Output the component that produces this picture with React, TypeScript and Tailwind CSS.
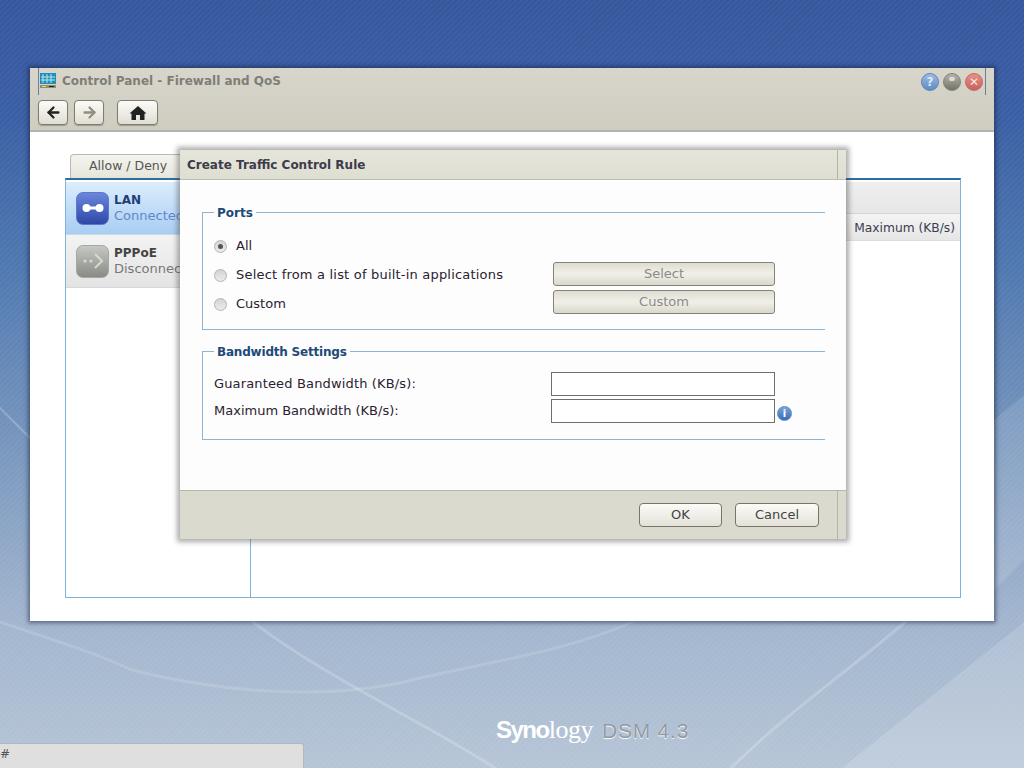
import React from 'react';
import { ArrowLeft, ArrowRight } from 'lucide-react';

const Wallpaper = () => (
  <svg className="absolute inset-0 w-full h-full" viewBox="0 0 1024 768" preserveAspectRatio="none">
    <defs>
      <linearGradient id="sky" x1="0" y1="0" x2="0" y2="1">
        <stop offset="0" stopColor="#34569c" />
        <stop offset="0.15" stopColor="#3a5ea4" />
        <stop offset="0.35" stopColor="#4f78b0" />
        <stop offset="0.55" stopColor="#7292bb" />
        <stop offset="0.8" stopColor="#a0b4cd" />
        <stop offset="1" stopColor="#b6c5d6" />
      </linearGradient>
      <pattern id="hatch" width="4" height="4" patternUnits="userSpaceOnUse" patternTransform="rotate(45)">
        <rect width="2" height="4" fill="#ffffff" opacity="0.04" />
      </pattern>
    </defs>
    <rect width="1024" height="768" fill="url(#sky)" />
    <path d="M842 768 L1024 622 L1024 768 Z" fill="#ffffff" opacity="0.15" />
    <path d="M994 420 L1024 395 L1024 560 L994 590 Z" fill="#ffffff" opacity="0.12" />
    <g fill="none" stroke="#ffffff" strokeLinecap="round">
      <path d="M0 408 L30 438" strokeWidth="2" opacity="0.22" />
      <path d="M0 622 C60 642 100 655 132 670 C230 695 340 700 420 678 C500 660 570 650 632 622" strokeWidth="3" opacity="0.14" />
      <path d="M253 622 C330 680 420 720 495 768" strokeWidth="3" opacity="0.2" />
      <path d="M905 622 C850 670 790 710 731 768" strokeWidth="3" opacity="0.2" />
    </g>
    <rect width="1024" height="768" fill="url(#hatch)" />
  </svg>
);

const ToolButton = ({ children, className }: { children: React.ReactNode; className: string }) => (
  <div className={`h-[25px] flex items-center justify-center rounded-[4px] border border-[#7f7d70] bg-gradient-to-b from-[#fbfbf8] to-[#e0ded3] shadow-[0_1px_1px_rgba(0,0,0,0.25)] ${className}`}>
    {children}
  </div>
);

const Ball = ({ className, children }: { className: string; children?: React.ReactNode }) => (
  <div className={`w-[18px] h-[18px] rounded-full flex items-center justify-center text-[12px] font-bold border leading-none ${className}`}>
    {children}
  </div>
);

const Radio = ({ checked }: { checked?: boolean }) => (
  <div className="w-[13px] h-[13px] rounded-full border border-[#b4b4b4] bg-gradient-to-b from-[#d4d4d4] to-[#ececec] flex items-center justify-center shrink-0">
    {checked && <div className="w-[5px] h-[5px] rounded-full bg-[#555]" />}
  </div>
);

const NetItem = ({ name, status, active }: { name: string; status: string; active?: boolean }) => (
  <div className={`h-[53px] flex items-center pl-[10px] gap-[5px] border-b overflow-hidden ${active ? 'bg-gradient-to-b from-[#dcedfd] to-[#a9cdf2] border-[#c5d8ec]' : 'bg-gradient-to-b from-[#f3f3f3] to-[#e4e4e4] border-[#d8d8d8]'}`}>
    <div className={`w-[33px] h-[33px] rounded-[7px] border flex items-center justify-center shrink-0 ${active ? 'bg-gradient-to-b from-[#6a86dc] to-[#2f48a8] border-[#5c78c8]' : 'bg-gradient-to-b from-[#c6c8c4] to-[#888b86] border-[#a5a7a3]'}`}>
      {active ? (
        <svg width="24" height="12" viewBox="0 0 24 12">
          <rect x="5" y="4.5" width="14" height="3" fill="#fff" />
          <circle cx="5.5" cy="6" r="4" fill="#fff" />
          <circle cx="18.5" cy="6" r="4" fill="#fff" />
        </svg>
      ) : (
        <svg width="24" height="18" viewBox="0 0 24 18" fill="none">
          <circle cx="4" cy="9" r="1.6" fill="#d8d8d2" />
          <circle cx="10" cy="9" r="1.6" fill="#d8d8d2" />
          <path d="M14 2 L21 9 L14 16" stroke="#d8d8d2" strokeWidth="2" />
        </svg>
      )}
    </div>
    <div className="leading-[15px] whitespace-nowrap -mt-[1px]">
      <div className={`text-[12px] font-bold ${active ? 'text-[#1f3f78]' : 'text-[#444]'}`}>{name}</div>
      <div className={`text-[13px] ${active ? 'text-[#5f88cc]' : 'text-[#777]'}`}>{status}</div>
    </div>
  </div>
);

const WideButton = ({ label }: { label: string }) => (
  <div className="w-[222px] h-[24px] rounded-[3px] border border-[#858378] bg-gradient-to-b from-[#dfddd2] via-[#f1f0e8] to-[#dad8cd] flex items-center justify-center text-[13px] text-[#8a8a88]">
    {label}
  </div>
);

const FooterButton = ({ label, className }: { label: string; className: string }) => (
  <div className={`h-[24px] rounded-[4px] border border-[#77756a] bg-gradient-to-b from-[#fbfbf8] to-[#e4e2d9] flex items-center justify-center text-[13px] text-[#444] ${className}`}>
    {label}
  </div>
);

const TextBox = () => <div className="w-[224px] h-[24px] border border-[#6f6f6f] bg-white" />;

export default function App() {
  return (
    <div className="relative w-[1024px] h-[768px] overflow-hidden [font-family:DejaVu_Sans,sans-serif]">
      <Wallpaper />

      {/* Control Panel window */}
      <div className="absolute left-[30px] top-[68px] w-[964px] h-[553px] flex flex-col bg-white shadow-[0_0_4px_2px_rgba(20,30,60,0.5)]">
        <div className="relative h-[64px] bg-gradient-to-b from-[#d8d6cb] to-[#cfcdc0] border-b-2 border-[#b4b4ae] pl-[8px] pr-[11px] shrink-0">
          <div className="absolute left-[8px] top-0 w-px h-[27px] bg-[#6a7ca0]" />
          <div className="absolute right-[8px] top-0 w-px h-[27px] bg-[#6a7ca0]" />
          <div className="h-[26px] flex items-center justify-between">
            <div className="flex items-center gap-[6px] pl-[2px]">
              <svg width="16" height="18" viewBox="0 0 16 18">
                <rect x="0" y="1" width="16" height="11" fill="#1f8fb5" />
                <path d="M3 2v9M7 2v9M11 2v9M1 5h14M1 8h14" stroke="#bfe6ef" strokeWidth="1" />
                <rect x="0" y="13" width="16" height="3" fill="#8d8f70" />
                <rect x="2" y="14" width="4" height="1" fill="#e0e060" />
                <rect x="9" y="14" width="5" height="1" fill="#222" />
              </svg>
              <span className="text-[12px] font-bold text-[#7e7e78]">Control Panel - Firewall and QoS</span>
            </div>
            <div className="flex items-center gap-[4px] mt-[2px]">
              <Ball className="text-[#dfe9f6] bg-gradient-to-b from-[#9dbce2] to-[#5f8bc4] border-[#5d84b8]">?</Ball>
              <Ball className="bg-gradient-to-b from-[#b5b5ab] to-[#74746c] border-[#808078]">
                <span className="w-[6px] h-[4px] rounded-full bg-[#ddd] -mt-[6px]" />
              </Ball>
              <Ball className="text-[#f7e4e0] bg-gradient-to-b from-[#e6908a] to-[#c9605a] border-[#c46a62]">✕</Ball>
            </div>
          </div>
          <div className="flex mt-[6px]">
            <ToolButton className="w-[30px] text-[#222]"><ArrowLeft size={17} strokeWidth={3.2} /></ToolButton>
            <ToolButton className="w-[30px] ml-[6px] text-[#908e80]"><ArrowRight size={17} strokeWidth={3.2} /></ToolButton>
            <ToolButton className="w-[41px] ml-[13px]">
              <svg width="18" height="16" viewBox="0 0 18 16">
                <path d="M9 1 L17.5 8.5 L15.5 8.5 L15.5 15 L11 15 L11 10 L7 10 L7 15 L2.5 15 L2.5 8.5 L0.5 8.5 Z" fill="#222" />
              </svg>
            </ToolButton>
          </div>
        </div>

        <div className="flex-1 pl-[35px] pr-[33px] pt-[22px] pb-[23px] flex flex-col">
          <div className="h-[24px] flex items-end pl-[5px]">
            <div className="w-[140px] h-[24px] rounded-t-[4px] border border-b-0 border-[#b8b8b0] bg-gradient-to-b from-[#f4f4ee] to-[#e6e6dc] pl-[18px] pt-[2px] text-[12.5px] text-[#555]">
              Allow / Deny
            </div>
          </div>
          <div className="flex-1 flex border border-[#7fb2da] border-t-2 border-t-[#2d6d9f]">
            <div className="w-[185px] border-r border-[#7fb2da] pt-[2px] shrink-0">
              <NetItem name="LAN" status="Connected" active />
              <NetItem name="PPPoE" status="Disconnected" />
            </div>
            <div className="flex-1 flex flex-col">
              <div className="h-[32px] bg-gradient-to-b from-[#efefef] to-[#e6e6e6] border-b border-[#d4d4d4] mt-[2px]" />
              <div className="h-[27px] bg-gradient-to-b from-[#f4f4f4] to-[#e6e6e6] border-b border-[#dcdcdc] flex justify-end items-center pr-[5px] pt-[3px] text-[12.25px] text-[#3c3c50]">
                Maximum (KB/s)
              </div>
            </div>
          </div>
        </div>
      </div>

      {/* Create Traffic Control Rule dialog */}
      <div className="absolute left-[180px] top-[150px] w-[666px] h-[389px] flex flex-col bg-[#fdfdfd] shadow-[0_0_5px_3px_rgba(70,70,70,0.45)]">
        <div className="relative h-[30px] shrink-0 bg-gradient-to-b from-[#e6e5da] to-[#dfded3] border-b border-[#bdbcb2] flex items-center pl-[7px] text-[12px] font-bold text-[#3c3c4a]">
          Create Traffic Control Rule
          <div className="absolute right-[8px] top-0 w-px h-full bg-[#b4b3a8]" />
        </div>

        <div className="flex-1 pl-[22px] pr-[21px] pt-[23px]">
          <fieldset className="border-l border-t border-b border-[#8fb4d2] h-[127px] pl-[11px] pt-[7px] flex">
            <legend className="text-[12px] font-bold text-[#1d4a78] px-[3px] translate-y-px">Ports</legend>
            <div className="w-[339px] text-[13px] text-[#2a2230]">
              <div className="flex items-center gap-[9px] h-[20px] mt-[8px]"><Radio checked /> All</div>
              <div className="flex items-center gap-[9px] h-[20px] mt-[9px] tracking-[0.2px]"><Radio /> Select from a list of built-in applications</div>
              <div className="flex items-center gap-[9px] h-[20px] mt-[9px]"><Radio /> Custom</div>
            </div>
            <div className="flex flex-col gap-[4px] mt-[34px]">
              <WideButton label="Select" />
              <WideButton label="Custom" />
            </div>
          </fieldset>

          <fieldset className="border-l border-t border-b border-[#8fb4d2] h-[98px] mt-[12px] pl-[11px] pt-[12px]">
            <legend className="text-[12px] font-bold text-[#1d4a78] px-[3px] translate-y-px tracking-[-0.2px]">Bandwidth Settings</legend>
            <div className="flex items-center h-[24px] text-[13px] text-[#2a2230]">
              <span className="w-[337px] tracking-[0.15px]">Guaranteed Bandwidth (KB/s):</span>
              <TextBox />
            </div>
            <div className="flex items-center h-[24px] mt-[3px] text-[13px] text-[#2a2230]">
              <span className="w-[337px]">Maximum Bandwidth (KB/s):</span>
              <TextBox />
              <div className="w-[15px] h-[15px] ml-[2px] mt-[5px] rounded-full bg-gradient-to-b from-[#78a4dc] to-[#3a6cb4] border border-[#5d8ac4] flex items-center justify-center text-white text-[10px] font-bold">i</div>
            </div>
          </fieldset>
        </div>

        <div className="relative h-[49px] shrink-0 bg-[#dbdacf] border-t border-[#b6b5aa] flex items-center justify-end pr-[27px] gap-[13px]">
          <FooterButton label="OK" className="w-[83px]" />
          <FooterButton label="Cancel" className="w-[84px]" />
          <div className="absolute right-[8px] top-0 w-px h-full bg-[#b4b3a8]" />
        </div>
      </div>

      {/* Logo */}
      <div className="absolute left-[496px] top-[710px] flex items-baseline">
        <span className="text-[24px] font-bold text-white tracking-[-1.5px] [font-family:Liberation_Sans,sans-serif]">Syno</span>
        <span className="text-[26px] text-white [font-family:Liberation_Serif,serif] tracking-[-0.5px]">logy</span>
        <span className="ml-[9px] text-[21px] tracking-[0.8px] text-[#929aa4] [text-shadow:0_1px_1px_#ffffff] [font-family:Liberation_Sans,sans-serif]">DSM 4.3</span>
      </div>

      {/* Taskbar stub */}
      <div className="absolute left-0 top-[743px] w-[304px] h-[25px] bg-[#dfdfdf] rounded-tr-[3px] border-t border-r border-[#b2b8c2] text-[12px] text-[#555] leading-[20px]">
        #
      </div>
    </div>
  );
}
